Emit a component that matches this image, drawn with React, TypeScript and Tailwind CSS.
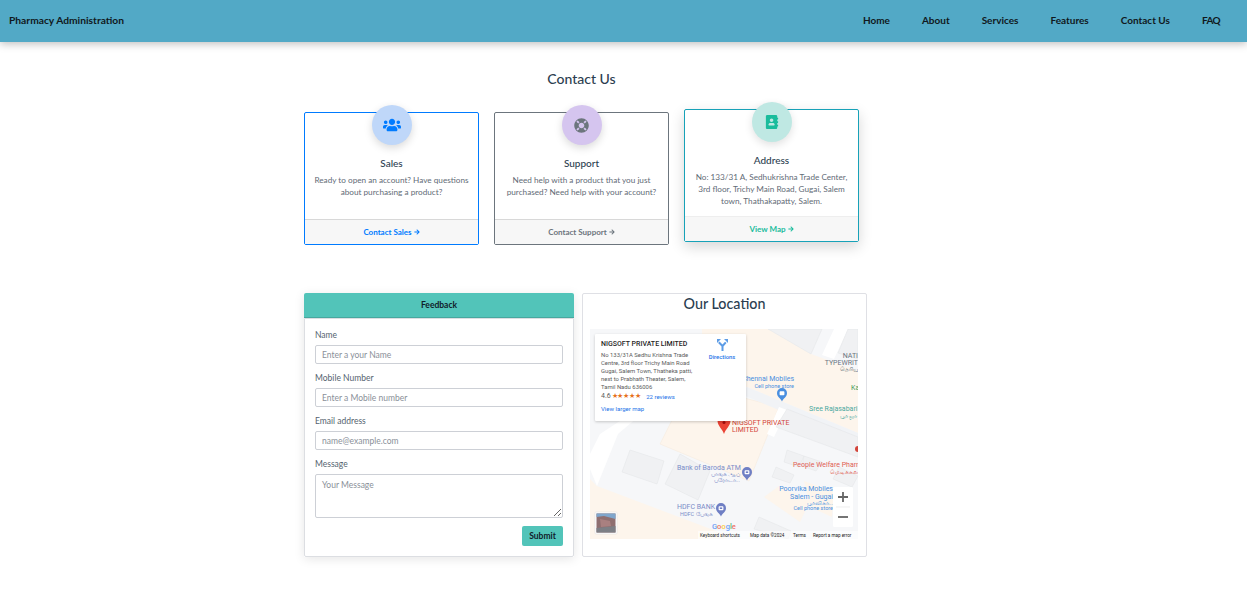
import React from 'react'
import { FaUsers, FaLifeRing, FaAddressBook, FaArrowRight } from 'react-icons/fa'

const navLinks = ['Home', 'About', 'Services', 'Features', 'Contact Us', 'FAQ']

const Header = () => (
  <header className="h-[42px] bg-[#52a9c6] shadow-[0_2px_8px_rgba(0,0,0,0.25)] flex items-center justify-between pl-[9px] pr-[27px] pb-[1px] relative">
    <span className="text-[10.25px] font-bold text-[#10181c]">Pharmacy Administration</span>
    <nav className="flex gap-[32px] text-[10px] font-bold text-[#10181c]">
      {navLinks.map((link) => (
        <a key={link} className={link === 'FAQ' ? 'tracking-[-0.6px]' : ''}>{link}</a>
      ))}
    </nav>
  </header>
)

const Cards = () => (
  <div className="flex gap-[15px] mt-[24px] h-[133px]">
    <div className="w-[175px] h-[133px] border border-[#007bff] rounded-[2px] flex flex-col">
      <div className="mx-auto -mt-[8px] w-10 h-10 shrink-0 rounded-full bg-[#bfd7f9] shadow-[0_3px_8px_rgba(0,0,0,0.15)] flex items-center justify-center">
        <FaUsers className="text-[#007bff] text-[18px]" />
      </div>
      <div className="flex-1 text-center px-[7px]">
        <h3 className="mt-[11px] text-[10px] leading-[14px] font-medium text-[#2c3e50]">Sales</h3>
        <p className="mt-[4px] text-[8.2px] leading-[12px] text-[#5f6b76]">Ready to open an account? Have questions about purchasing a product?</p>
      </div>
      <div className="h-[25px] bg-[#f7f7f7] border-t border-[#d8d8d8] flex items-center justify-center gap-[2px] text-[8px] font-bold text-[#007bff]">
        Contact Sales <FaArrowRight className="text-[6px]" />
      </div>
    </div>

    <div className="w-[175px] h-[133px] border border-[#6c757d] rounded-[2px] flex flex-col">
      <div className="mx-auto -mt-[8px] w-10 h-10 shrink-0 rounded-full bg-[#d5c5ef] shadow-[0_3px_8px_rgba(0,0,0,0.15)] flex items-center justify-center">
        <FaLifeRing className="text-[#6c757d] text-[15px]" />
      </div>
      <div className="flex-1 text-center px-[7px]">
        <h3 className="mt-[11px] text-[10px] leading-[14px] font-medium text-[#2c3e50]">Support</h3>
        <p className="mt-[4px] text-[8.2px] leading-[12px] text-[#5f6b76]">Need help with a product that you just purchased? Need help with your account?</p>
      </div>
      <div className="h-[25px] bg-[#f7f7f7] border-t border-[#d8d8d8] flex items-center justify-center gap-[2px] text-[8px] font-bold text-[#6c757d]">
        Contact Support <FaArrowRight className="text-[6px]" />
      </div>
    </div>

    <div className="w-[175px] h-[133px] -mt-[3px] border border-[#17a2b8] rounded-[2px] flex flex-col shadow-[0_5px_14px_rgba(0,0,0,0.16)]">
      <div className="mx-auto -mt-[8px] w-10 h-10 shrink-0 rounded-full bg-[#bfe8e3] shadow-[0_3px_8px_rgba(0,0,0,0.12)] flex items-center justify-center">
        <FaAddressBook className="text-[#1abc9c] text-[14px]" />
      </div>
      <div className="flex-1 text-center px-[7px]">
        <h3 className="mt-[11px] text-[10px] leading-[14px] font-medium text-[#2c3e50]">Address</h3>
        <p className="mt-[4px] text-[8.2px] leading-[12px] text-[#5f6b76]">No: 133/31 A, Sedhukrishna Trade Center, 3rd floor, Trichy Main Road, Gugai, Salem town, Thathakapatty, Salem.</p>
      </div>
      <div className="h-[25px] bg-[#f7f7f7] border-t border-[#eeeeee] flex items-center justify-center gap-[2px] text-[8px] font-bold text-[#1abc9c]">
        View Map <FaArrowRight className="text-[6px]" />
      </div>
    </div>
  </div>
)

const FeedbackForm = () => {
  const inputClass =
    'w-full h-[19px] border border-[#cdd0d6] rounded-[2px] px-[6px] text-[8.5px] outline-none placeholder:text-[#8a9099] mt-[4px] block'
  const labelClass = 'block text-[8.5px] leading-[12px] text-[#55636f]'
  return (
    <div className="w-[270px] h-[264px] flex flex-col shadow-[0_2px_10px_rgba(0,0,0,0.1)]">
      <div className="h-[25px] bg-[#52c4b9] border-b border-[#47a89f] rounded-t-[2px] flex items-center justify-center text-[8.5px] font-bold text-[#10202a]">
        Feedback
      </div>
      <form className="flex-1 border border-[#dcdee2] rounded-b-[2px] bg-white px-[10px] pt-[10px]">
        <label className={labelClass}>Name</label>
        <input className={inputClass} placeholder="Enter a your Name" />
        <label className={`${labelClass} mt-[8px]`}>Mobile Number</label>
        <input className={inputClass} placeholder="Enter a Mobile number" />
        <label className={`${labelClass} mt-[8px]`}>Email address</label>
        <input className={inputClass} placeholder="name@example.com" />
        <label className={`${labelClass} mt-[8px]`}>Message</label>
        <textarea className="w-full h-[44px] border border-[#cdd0d6] rounded-[2px] px-[6px] py-[4px] text-[8.5px] outline-none placeholder:text-[#8a9099] mt-[4px] block" placeholder="Your Message" />
        <div className="flex justify-end mt-[8px]">
          <button type="button" className="w-[41px] h-[20px] bg-[#52c4b9] rounded-[2px] text-[8.5px] font-bold text-[#10202a]">
            Submit
          </button>
        </div>
      </form>
    </div>
  )
}

const MapPin = ({ x, y, color, glyph }: { x: number; y: number; color: string; glyph?: string }) => (
  <g transform={`translate(${x} ${y})`}>
    <path d="M0 7.5C-1 4.5-5 3.2-5-1a5 5 0 0 1 10 0C5 3.2 1 4.5 0 7.5Z" fill={color} />
    <rect x="-2.4" y="-2.8" width="4.8" height="4" rx="0.8" fill="#fff" />
    {glyph && <rect x="-1.2" y="-1.6" width="2.4" height="1.6" fill={color} />}
  </g>
)

const MapCanvas = () => (
  <svg width="268" height="210" viewBox="0 0 268 210" className="block font-['Roboto','Noto_Sans',sans-serif]">
    <rect width="268" height="210" fill="#f6f7f9" />
    {/* peach blocks */}
    <polygon points="112,0 178,0 221,25 268,42 268,104 157,58 112,50" fill="#fdf5ec" />
    <polygon points="100,55 189,78 159,152 70,115" fill="#fdf5ec" stroke="#f5e8da" strokeWidth="0.5" />
    <polygon points="0,150 7,157 134,205 134,210 0,210" fill="#fdf5ec" />
    <polygon points="189,157 220,172 210,193 174,168" fill="#fdf5ec" />
    <polygon points="214,152 244,163 242,188 220,178" fill="#fdf5ec" />
    {/* roads */}
    <polygon points="157,58 268,104 268,114 153,66" fill="#f1f3f6" />
    <polygon points="189,78 197,81 184,108 177,105" fill="#ffffff" />
    <polygon points="36,88 48,88 28,105 7,157 0,140 0,125 10,105" fill="#ffffff" />
    <polygon points="244,0 258,0 244,30 232,26" fill="#ffffff" />
    {/* buildings */}
    <g fill="#f0f1f3" stroke="#e3e4e7" strokeWidth="0.5">
      <polygon points="178,0 232,0 221,25" />
      <polygon points="258,0 268,0 268,30 248,24" />
      <polygon points="197,80 268,108 268,128 186,98" />
      <polygon points="40,121 74,132 67,155 32,143" />
      <polygon points="90,125 120,142 108,171 75,155" />
      <polygon points="197,121 214,127 209,138 194,133" />
      <polygon points="214,127 232,133 226,142 212,137" />
      <polygon points="186,138 204,146 200,154 182,148" />
      <polygon points="249,138 268,147 262,158 243,150" />
      <polygon points="169,188 201,202 198,210 164,200" />
    </g>
    {/* labels */}
    <g fontSize="7">
      <text x="268" y="29" textAnchor="end" fill="#6b7580">NATI</text>
      <text x="268" y="36" textAnchor="end" fill="#6b7580">TYPEWRIT</text>
      <text x="268" y="42" textAnchor="end" fontSize="5.5" fill="#6b7580">தெரியு</text>
      <text x="261" y="61" fill="#3f9a5b">Ka</text>
      <text x="204" y="52" textAnchor="end" fill="#4a8fe0">Chennai Mobiles</text>
      <text x="204" y="58.5" textAnchor="end" fontSize="5.5" fill="#4a8fe0">Cell phone store</text>
      <text x="219" y="82" fill="#4aa8a0">Sree Rajasabari</text>
      <text x="250" y="89" fontSize="5.5" fill="#4aa8a0">பூர் ஜா</text>
      <text x="142" y="96" fill="#d2443a">NIGSOFT PRIVATE</text>
      <text x="142" y="103" fill="#d2443a">LIMITED</text>
      <text x="87" y="141" fill="#7a8cc8">Bank of Baroda ATM</text>
      <text x="150" y="147" textAnchor="end" fontSize="5.5" fill="#7a8cc8">பாங்க் ஆப்</text>
      <text x="150" y="153" textAnchor="end" fontSize="5.5" fill="#7a8cc8">பரோடா...</text>
      <text x="87" y="180" fill="#7a8cc8">HDFC BANK</text>
      <text x="90" y="186.5" fontSize="5.5" fill="#7a8cc8">HDFC பேங்க்</text>
      <text x="203" y="137.5" fill="#e06055">People Welfare Pharm</text>
      <text x="268" y="145" textAnchor="end" fontSize="5.5" fill="#e06055">மெடிக்கல்</text>
      <text x="243" y="162" textAnchor="end" fill="#4a8fe0">Poorvika Mobiles</text>
      <text x="243" y="169.5" textAnchor="end" fill="#4a8fe0">Salem - Gugai</text>
      <text x="243" y="175.5" textAnchor="end" fontSize="5.5" fill="#4a8fe0">பூர்விகா...</text>
      <text x="243" y="180.5" textAnchor="end" fontSize="5.5" fill="#4a8fe0">Cell phone store</text>
    </g>
    <MapPin x={192} y={65} color="#4a8fe0" />
    <MapPin x={157} y={144} color="#6f7fc4" glyph="b" />
    <MapPin x={131} y={180} color="#6f7fc4" glyph="b" />
    <circle cx="268" cy="120" r="3" fill="#d2443a" />
    {/* marker */}
    <path d="M134 105C132.5 100 127.5 97 127.5 91.5a6.5 6.5 0 0 1 13 0C140.5 97 135.5 100 134 105Z" fill="#ea4335" />
    <circle cx="134" cy="93.5" r="1.5" fill="#a50e0e" />
    {/* google */}
    <text x="122" y="199.5" fontSize="7.5" fontWeight="500">
      <tspan fill="#6f9ff5">G</tspan>
      <tspan fill="#ef7468">o</tspan>
      <tspan fill="#fbcb40">o</tspan>
      <tspan fill="#6f9ff5">g</tspan>
      <tspan fill="#62bb7e">l</tspan>
      <tspan fill="#ef7468">e</tspan>
    </text>
    {/* attribution */}
    <rect x="108" y="202" width="160" height="8" fill="#ffffff" opacity="0.6" />
    <g fontSize="4.6" fill="#222">
      <text x="110" y="207.5">Keyboard shortcuts</text>
      <text x="160" y="207.5">Map data ©2024</text>
      <text x="203" y="207.5">Terms</text>
      <text x="223" y="207.5">Report a map error</text>
    </g>
    {/* street view thumbnail */}
    <rect x="5" y="183" width="22" height="22" rx="1" fill="#ffffff" stroke="#dddddd" strokeWidth="0.5" />
    <rect x="6.5" y="184.5" width="19" height="19" fill="#8f6f70" />
    <polygon points="6.5,184.5 25.5,184.5 25.5,190 14,187 6.5,188" fill="#7fa6cc" />
    <polygon points="6.5,199 25.5,197 25.5,203.5 6.5,203.5" fill="#7d7f85" />
    <polygon points="10,190 20,192 21,197 11,198" fill="#a98080" />
    {/* zoom controls */}
    <rect x="243" y="158" width="20" height="40" rx="1.5" fill="#ffffff" />
    <line x1="246" y1="178" x2="260" y2="178" stroke="#e6e6e6" strokeWidth="0.7" />
    <path d="M253 163v10M248 168h10" stroke="#666" strokeWidth="1.8" />
    <path d="M248 188h10" stroke="#666" strokeWidth="1.8" />
  </svg>
)

const InfoWindow = () => (
  <div className="absolute left-[5px] top-[5px] w-[151px] h-[87px] bg-white rounded-[1px] shadow-[0_1px_3px_rgba(0,0,0,0.2)] pl-[6px] pt-[6px] font-['Roboto',sans-serif]">
    <div className="text-[7px] leading-[8px] font-medium text-[#1f1f1f]">NIGSOFT PRIVATE LIMITED</div>
    <div className="w-[96px] mt-[3px] text-[5.9px] leading-[8px] text-[#5b5b5b]">
      No 133/31A Sedhu Krishna Trade Centre, 3rd floor Trichy Main Road Gugai, Salem Town, Thatheka patti, next to Prabhath Theater, Salem, Tamil Nadu 636006
    </div>
    <div className="mt-[1px] flex items-center text-[7px] leading-[9px] text-[#5b5b5b]">
      4.6
      <span className="ml-[1px] text-[6.5px] tracking-[-0.3px] text-[#e7711b]">★★★★★</span>
      <span className="ml-[6px] text-[6px] text-[#1a73e8]">22 reviews</span>
    </div>
    <div className="mt-[4px] text-[6px] leading-[8px] text-[#1a73e8]">View larger map</div>
    <div className="absolute left-[105px] top-[5px] w-[44px] flex flex-col items-center">
      <svg width="11" height="12" viewBox="0 0 11 12">
        <path d="M5.5 12V7L1.8 3.3M5.5 7l3.3-3.7" fill="none" stroke="#5c9ce6" strokeWidth="2" />
        <path d="M0 0h4L0 4ZM11 0H7l4 4Z" fill="#5c9ce6" />
      </svg>
      <span className="mt-[2px] text-[5.8px] font-medium text-[#1a73e8]">Directions</span>
    </div>
  </div>
)

const Location = () => (
  <div className="w-[285px] h-[264px] border border-[#dfe0e5] rounded-[2px] px-[7px]">
    <h2 className="h-[22px] leading-[20px] text-center text-[14.3px] font-medium text-[#2c3e50]">Our Location</h2>
    <div className="relative mt-[13px] w-[268px] h-[210px] overflow-hidden">
      <MapCanvas />
      <InfoWindow />
    </div>
  </div>
)

export default function App() {
  return (
    <div className="min-h-[596px] bg-white font-['Lato',sans-serif]">
      <Header />
      <main className="pl-[304px]">
        <h1 className="w-[555px] pt-[28px] text-center text-[14px] leading-[18px] font-medium text-[#2c3e50]">Contact Us</h1>
        <Cards />
        <div className="flex gap-[8px] mt-[48px]">
          <FeedbackForm />
          <Location />
        </div>
      </main>
    </div>
  )
}
